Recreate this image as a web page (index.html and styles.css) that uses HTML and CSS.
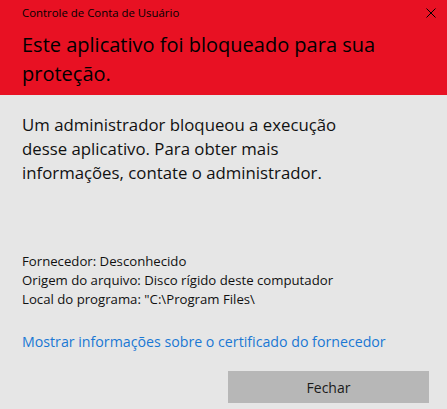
FILE: index.html
```html
<!DOCTYPE html>
<html lang="pt-BR">

<head>
    <meta charset="UTF-8">
    <meta name="viewport" content="width=device-width, initial-scale=1.0">
    <title>Controle de Conta de Usuário</title>
    <link rel="stylesheet" href="styles.css">
</head>

<body>
    <div class="dialog">
        <!-- faixa vermelha do topo -->
        <div class="header">
            <div class="title-bar">
                <span class="title">Controle de Conta de Usuário</span>
                <svg class="close" width="10" height="10" viewBox="0 0 10 10">
                    <path d="M0.5 0.5 L9.5 9.5 M9.5 0.5 L0.5 9.5" stroke="#000" stroke-width="1" fill="none" />
                </svg>
            </div>
            <h1 class="heading">Este aplicativo foi bloqueado para sua proteção.</h1>
        </div>

        <div class="content">
            <p class="message">Um administrador bloqueou a execução desse aplicativo. Para obter mais informações, contate o administrador.</p>

            <div class="details">
                <div>Fornecedor: Desconhecido</div>
                <div>Origem do arquivo: Disco rígido deste computador</div>
                <div>Local do programa: "C:\Program Files\</div>
            </div>

            <a class="link" href="#">Mostrar informações sobre o certificado do fornecedor</a>

            <div class="actions">
                <button class="button">Fechar</button>
            </div>
        </div>
    </div>
</body>

</html>
```

FILE: styles.css
```css
body {
    margin: 0;
    font-family: "Open Sans", "Noto Sans", sans-serif;
    background-color: #e6e6e6;
    color: #000;
}

.dialog {
    width: 447px;
    height: 409px;
    display: flex;
    flex-direction: column;
}

.header {
    background-color: #e81123;
    height: 95px;
    box-sizing: border-box;
    padding: 5px 11px 0 22px;
}

.title-bar {
    display: flex;
    justify-content: space-between;
    align-items: center;
    height: 16px;
}

.title {
    font-size: 11.4px;
    line-height: 16px;
}

.close {
    display: block;
}

.heading {
    margin: 9px 0 0;
    width: 360px;
    font-size: 20px;
    font-weight: normal;
    line-height: 29px;
}

.content {
    padding: 18px 18px 0 22px;
    display: flex;
    flex-direction: column;
}

.message {
    margin: 0;
    width: 335px;
    font-size: 16.8px;
    line-height: 24px;
    color: #111;
}

.details {
    margin-top: 67px;
    font-size: 13.2px;
    line-height: 19px;
    color: #111;
}

.link {
    margin-top: 24px;
    font-size: 14.2px;
    line-height: 18px;
    color: #1a78d4;
    text-decoration: none;
}

.actions {
    display: flex;
    justify-content: flex-end;
    margin-top: 20px;
}

.button {
    width: 201px;
    height: 32px;
    border: none;
    background-color: #b7b7b7;
    font-family: inherit;
    font-size: 14px;
    color: #1a1a1a;
}
```
